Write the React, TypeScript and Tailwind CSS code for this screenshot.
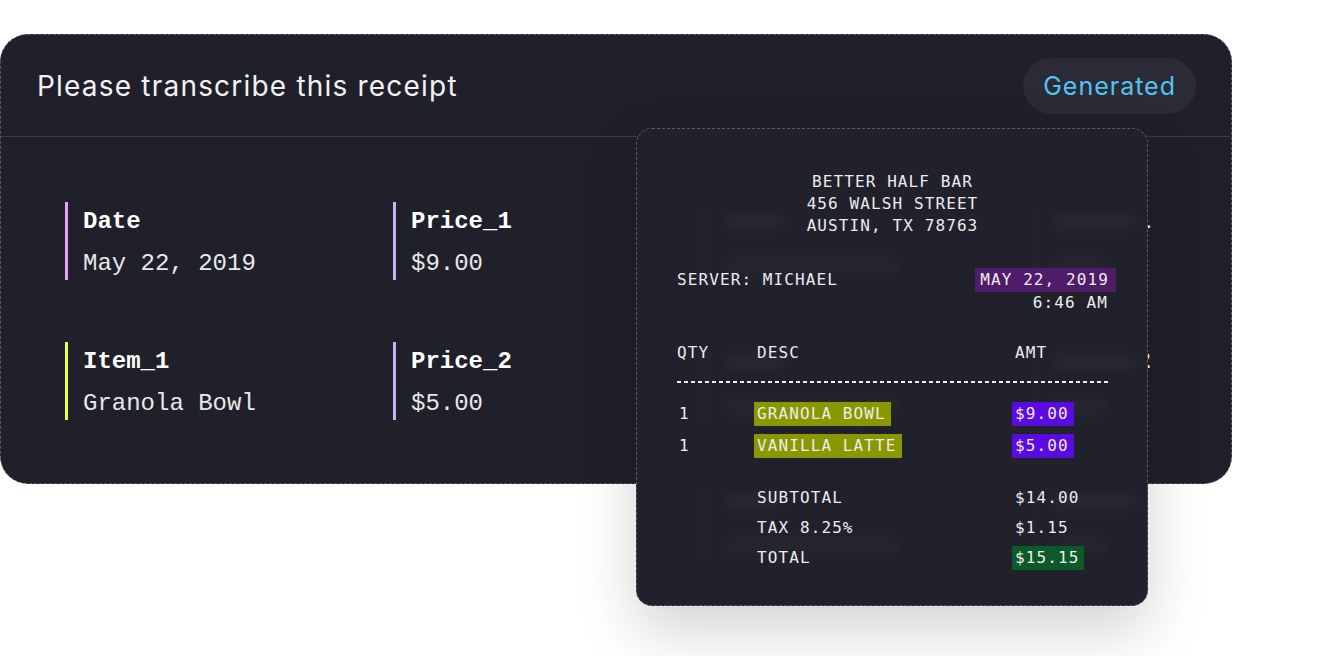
import React from 'react';

const fieldFont = { fontFamily: '"Liberation Mono", "DejaVu Sans Mono", monospace' };
const receiptFont = { fontFamily: '"DejaVu Sans Mono", "Liberation Mono", monospace' };
const uiFont = { fontFamily: 'Inter, "Noto Sans", sans-serif' };

interface Field {
  label: string;
  value: string;
  bar: string;
}

const fields: Field[] = [
  { label: 'Date', value: 'May 22, 2019', bar: 'border-[#e3a4f4]' },
  { label: 'Price_1', value: '$9.00', bar: 'border-[#cdb0f4]' },
  { label: 'Server', value: 'Michael', bar: 'border-[#e3a4f4]' },
  { label: 'Qty_1', value: '1', bar: 'border-[#cdb0f4]' },
  { label: 'Item_1', value: 'Granola Bowl', bar: 'border-[#e8ff45]' },
  { label: 'Price_2', value: '$5.00', bar: 'border-[#cdb0f4]' },
  { label: 'Item_2', value: 'Latte', bar: 'border-[#e8ff45]' },
  { label: 'Qty_2', value: '2', bar: 'border-[#cdb0f4]' },
];

const FieldCard: React.FC<{ field: Field }> = ({ field }) => (
  <div className={`h-[78px] flex flex-col border-l-[3px] pl-[15px] ${field.bar}`} style={fieldFont}>
    <span className="text-[24px] leading-[39px] font-bold text-white">{field.label}</span>
    <span className="text-[24px] leading-[45px] text-[#e8e8ea]">{field.value}</span>
  </div>
);

// faint blurred copy of the fields, seen through the receipt paper
const GhostRows: React.FC = () => (
  <div className="absolute inset-0 overflow-hidden rounded-[16px] pointer-events-none">
    {[0, 140, 280].map((top) => (
      <React.Fragment key={top}>
        <div className="absolute w-[6px] h-[74px] rounded-full bg-white/[0.025] blur-[4px]" style={{ left: 66, top: 80 + top }} />
        <div className="absolute w-[62px] h-[18px] rounded-full bg-white/[0.03] blur-[6px]" style={{ left: 86, top: 84 + top }} />
        <div className="absolute w-[180px] h-[18px] rounded-full bg-white/[0.025] blur-[7px]" style={{ left: 84, top: 128 + top }} />
        <div className="absolute w-[6px] h-[74px] rounded-full bg-white/[0.025] blur-[4px]" style={{ left: 396, top: 80 + top }} />
        <div className="absolute w-[84px] h-[18px] rounded-full bg-white/[0.03] blur-[6px]" style={{ left: 416, top: 84 + top }} />
        <div className="absolute w-[60px] h-[18px] rounded-full bg-white/[0.025] blur-[7px]" style={{ left: 412, top: 128 + top }} />
      </React.Fragment>
    ))}
  </div>
);

const Mark: React.FC<{ color: string; children: React.ReactNode }> = ({ color, children }) => (
  <span className={`-ml-[3px] pl-[3px] pr-[5px] inline-block leading-[24px] ${color}`}>{children}</span>
);

const Row: React.FC<{ a?: React.ReactNode; b: React.ReactNode; c: React.ReactNode }> = ({ a, b, c }) => (
  <div className="grid grid-cols-[80px_258px_1fr] leading-[24px]">
    <span className="pl-[2px]">{a}</span>
    <span>{b}</span>
    <span>{c}</span>
  </div>
);

const Receipt: React.FC = () => (
  <div
    className="absolute left-[636px] top-[128px] w-[512px] h-[478px] rounded-[16px] border border-dashed border-[#5b5c64] bg-[#20212a] shadow-[0_24px_60px_rgba(0,0,0,0.18)] text-[16px] tracking-[1.1px] text-[#ececee]"
    style={receiptFont}
  >
    <GhostRows />
    <div className="relative pt-[42px] pl-[40px] pr-[39px]">
      <div className="flex flex-col items-center leading-[22px]">
        <span>BETTER HALF BAR</span>
        <span>456 WALSH STREET</span>
        <span>AUSTIN, TX 78763</span>
      </div>

      <div className="mt-[31px] flex justify-between items-start">
        <span className="leading-[24px]">SERVER: MICHAEL</span>
        <div className="flex flex-col items-end">
          <span className="-mr-[8px] pl-[5px] pr-[7px] leading-[24px] bg-[#4e1c68]">MAY 22, 2019</span>
          <span className="leading-[22px]">6:46 AM</span>
        </div>
      </div>

      <div className="mt-[28px] grid grid-cols-[80px_258px_1fr] leading-[22px]">
        <span>QTY</span>
        <span>DESC</span>
        <span>AMT</span>
      </div>

      <div className="mt-[17px] h-[2px] bg-[repeating-linear-gradient(90deg,#efefef_0px,#efefef_4px,transparent_4px,transparent_7px)]" />

      <div className="mt-[19px] flex flex-col gap-[8px]">
        <Row a="1" b={<Mark color="bg-[#8a9800]">GRANOLA BOWL</Mark>} c={<Mark color="bg-[#5a0be0]">$9.00</Mark>} />
        <Row a="1" b={<Mark color="bg-[#8a9800]">VANILLA LATTE</Mark>} c={<Mark color="bg-[#5a0be0]">$5.00</Mark>} />
      </div>

      <div className="mt-[28px] flex flex-col gap-[6px]">
        <Row b="SUBTOTAL" c="$14.00" />
        <Row b="TAX 8.25%" c="$1.15" />
        <Row b="TOTAL" c={<Mark color="bg-[#0c5a29]">$15.15</Mark>} />
      </div>
    </div>
  </div>
);

const App: React.FC = () => {
  return (
    <div className="relative w-[1336px] h-[656px] bg-white overflow-hidden">
      <div className="pt-[34px]">
        <div className="w-[1232px] h-[450px] rounded-[28px] border border-dashed border-[#5a5b63] bg-[#1f2029] overflow-hidden">
          <div className="h-[102px] flex items-center justify-between pl-[36px] pr-[35px] border-b border-[#3a3b43]">
            <h1 className="text-[28px] text-[#f2f2f4] font-normal tracking-[1.2px]" style={uiFont}>
              Please transcribe this receipt
            </h1>
            <span
              className="h-[56px] px-[20px] pt-[3px] rounded-full bg-[#2a2b34] text-[#52c3f2] text-[25px] tracking-[1px] flex items-center"
              style={uiFont}
            >
              Generated
            </span>
          </div>

          <div className="pt-[65px] pl-[64px] grid grid-cols-[328px_328px_340px_1fr] gap-y-[62px]">
            {fields.map((f) => (
              <FieldCard key={f.label} field={f} />
            ))}
          </div>
        </div>
      </div>

      <Receipt />
    </div>
  );
};

export default App;
